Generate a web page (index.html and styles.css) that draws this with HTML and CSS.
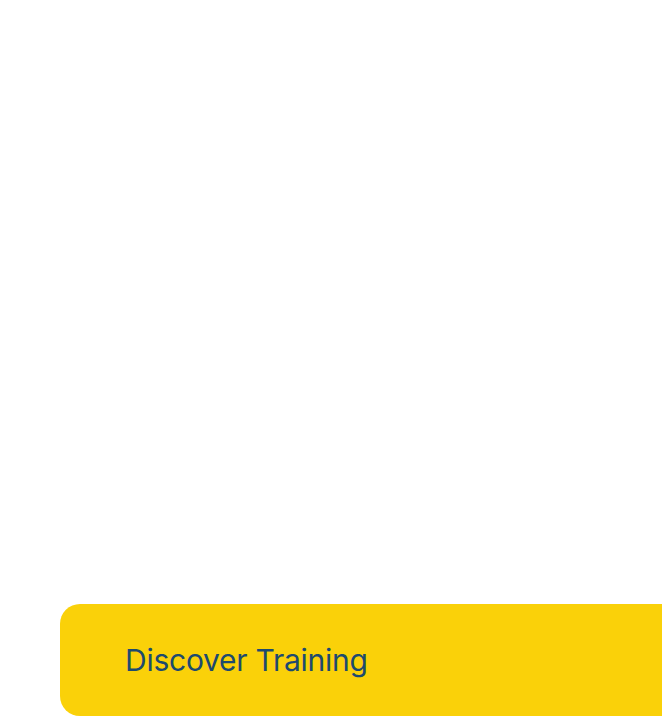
FILE: index.html
```html
<!DOCTYPE html>
<html>
<head>
<meta charset="utf-8">
<link rel="stylesheet" href="styles.css">
</head>
<body>
<div class="page">
  <div class="cta">
    <span class="cta-label">Discover Training</span>
  </div>
</div>
</body>
</html>
```
FILE: styles.css
```css
html, body {
  margin: 0;
  padding: 0;
  background: #ffffff;
  overflow: hidden;
}
.page {
  height: 716px;
  padding: 604px 0 0 60px;
  box-sizing: border-box;
}
.cta {
  height: 112px;
  background: #fad109;
  border-radius: 20px 0 0 20px;
  display: flex;
  align-items: center;
  padding-left: 65px;
  box-sizing: border-box;
}
.cta-label {
  font-family: Inter, "Noto Sans", sans-serif;
  font-size: 30px;
  color: #1d4a6e;
  letter-spacing: -0.25px;
}
```
